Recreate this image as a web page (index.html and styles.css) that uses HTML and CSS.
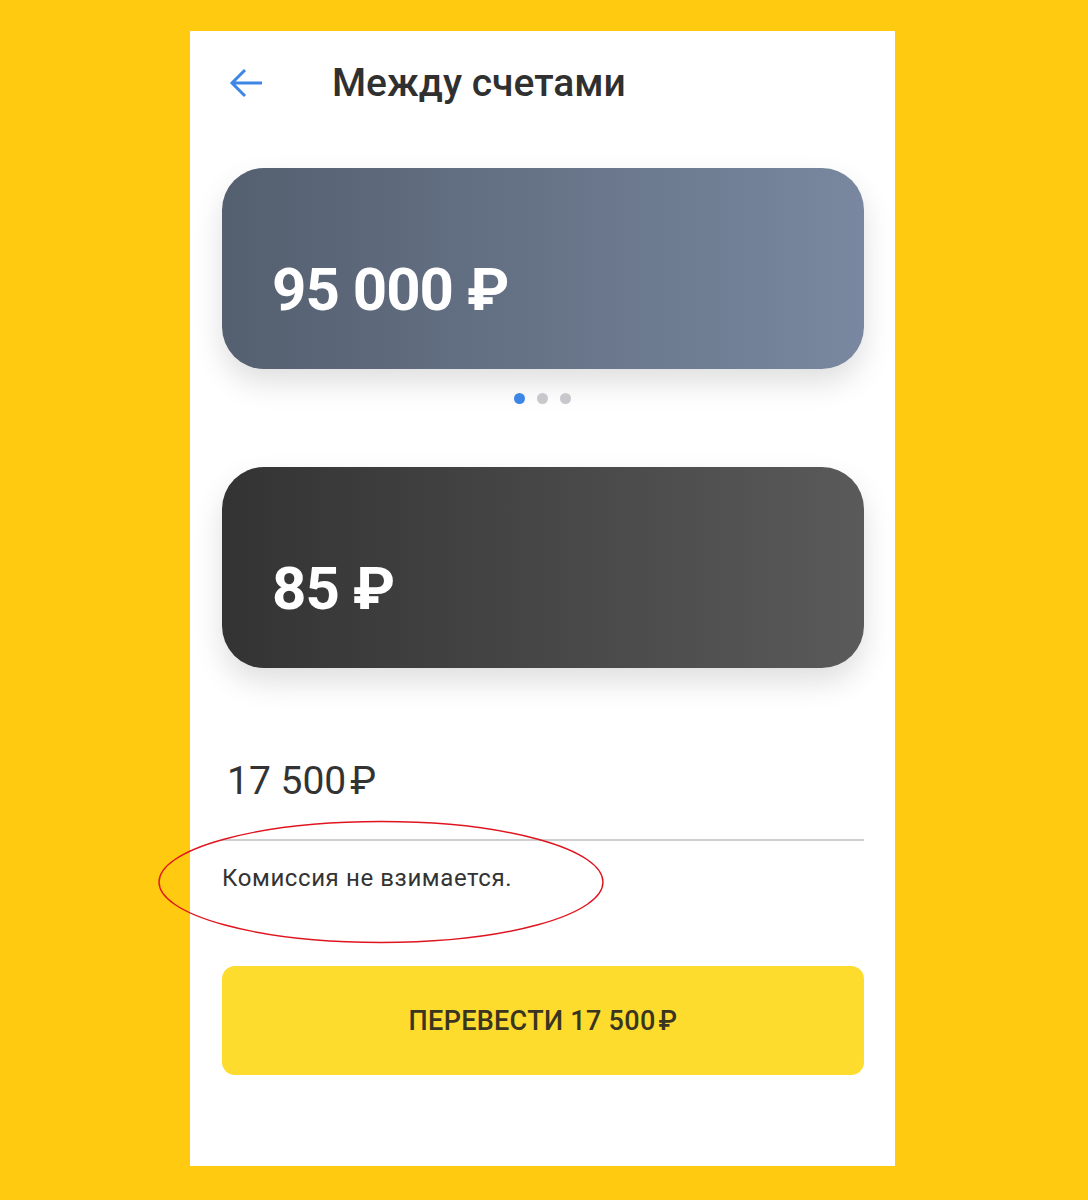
FILE: index.html
```html
<!DOCTYPE html>
<html>
<head>
    <link rel="stylesheet" href="styles.css">
</head>
<body>
    <div class="screen">
        <div class="top-bar">
            <button class="back-btn" type="button">
                <svg width="34" height="30" viewBox="0 0 34 30">
                    <path d="M33 15H3M16 2L3 15l13 13" fill="none" stroke="#3d86e6" stroke-width="3" stroke-linecap="butt" stroke-linejoin="miter"/>
                </svg>
            </button>
            <h1 class="title">Между счетами</h1>
        </div>

        <div class="card card-from">
            <span class="card-amount">95 000 ₽</span>
        </div>
        <div class="dots">
            <span class="dot active"></span>
            <span class="dot"></span>
            <span class="dot"></span>
        </div>

        <div class="card card-to">
            <span class="card-amount">85 ₽</span>
        </div>

        <div class="amount-field">
            <div class="amount-value">17 500<span class="rub">₽</span></div>
        </div>

        <div class="fee-note">
            Комиссия не взимается.
            <svg class="mark" width="450" height="126" viewBox="0 0 450 126">
                <ellipse cx="225" cy="63" rx="222" ry="60.5" fill="none" stroke="#e0141e" stroke-width="1.4"/>
            </svg>
        </div>

        <button class="transfer-btn" type="button">ПЕРЕВЕСТИ 17 500<span class="rub">₽</span></button>
    </div>
</body>
</html>
```

FILE: styles.css
```css
body {
    margin: 0;
    background: #ffca0f;
    font-family: Roboto, "Noto Sans", sans-serif;
    color: #333;
}

.screen {
    width: 705px;
    height: 1135px;
    margin: 31px 0 0 190px;
    padding: 0 31px 0 32px;
    box-sizing: border-box;
    background: #fff;
}

.top-bar {
    display: flex;
    align-items: center;
    height: 104px;
}

.back-btn {
    display: flex;
    padding: 0;
    margin: 0 0 0 7px;
    border: none;
    background: none;
}

.title {
    margin: 0 0 0 69px;
    font-size: 39px;
    font-weight: 500;
    color: #303030;
}

.card {
    height: 201px;
    border-radius: 42px;
    padding: 92px 0 0 50px;
    box-sizing: border-box;
    box-shadow: 0 14px 30px rgba(0, 0, 0, 0.13);
}

.card-from {
    margin-top: 33px;
    background: linear-gradient(to right, #545f6f, #7988a0);
}

.card-to {
    margin-top: 63px;
    background: linear-gradient(to right, #333333, #5a5a5a);
}

.card-amount {
    display: block;
    font-size: 60px;
    line-height: 60px;
    font-weight: 700;
    letter-spacing: -1px;
    color: #fff;
}

.dots {
    display: flex;
    justify-content: center;
    gap: 12px;
    margin-top: 24px;
    height: 11px;
    padding-right: 1px;
}

.dot {
    width: 11px;
    height: 11px;
    border-radius: 50%;
    background: #c8c8cc;
}

.dot.active {
    background: #3d86e6;
}

.amount-field {
    margin-top: 85px;
    padding: 0 0 30px 5px;
    border-bottom: 2px solid #cfcfcf;
}

.amount-value {
    font-size: 39px;
    line-height: 56px;
    color: #333;
}

.rub {
    margin-left: 4px;
}

.fee-note {
    position: relative;
    margin-top: 21px;
    font-size: 24px;
    line-height: 32px;
    letter-spacing: 0.6px;
    color: #333;
}

/* hand-drawn highlight around the note */
.mark {
    position: absolute;
    left: -66px;
    top: -43px;
    pointer-events: none;
}

.transfer-btn {
    display: block;
    width: 100%;
    height: 109px;
    margin-top: 72px;
    border: none;
    border-radius: 13px;
    background: #fddc2e;
    font-family: Roboto, "Noto Sans", sans-serif;
    font-size: 27px;
    font-weight: 500;
    letter-spacing: 0.3px;
    color: #3a3520;
}

.transfer-btn .rub {
    margin-left: 3px;
}
```
